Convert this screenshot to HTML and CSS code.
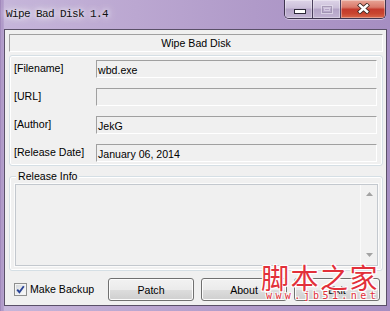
FILE: index.html
```html
<!DOCTYPE html>
<html lang="en">
<head>
<meta charset="utf-8">
<title>Wipe Bad Disk 1.4</title>
<link rel="stylesheet" href="styles.css">
</head>
<body>
<div class="window">
  <div class="titlebar">
    <span class="title">Wipe Bad Disk 1.4</span>
    <div class="caption">
      <div class="cbtn min">
        <svg width="12" height="5" viewBox="0 0 12 5"><rect x="0.5" y="0.5" width="11" height="4" fill="#fff" stroke="#2b2838"/></svg>
      </div>
      <div class="cbtn max">
        <svg width="12" height="9" viewBox="0 0 12 9"><rect x="0.5" y="0.5" width="11" height="8" fill="none" stroke="#e6e0ee" stroke-opacity="0.7"/><rect x="1.5" y="1.5" width="9" height="6" fill="none" stroke="#9c90ad" stroke-opacity="0.8"/><rect x="3.5" y="3.5" width="5" height="2" fill="none" stroke="#e6e0ee" stroke-opacity="0.6"/></svg>
      </div>
      <div class="cbtn close">
        <svg width="13" height="11" viewBox="0 0 13 11"><path d="M1.5 1 L11.5 10 M11.5 1 L1.5 10" stroke="#3b2520" stroke-width="4.2"/><path d="M2 1.5 L11 9.5 M11 1.5 L2 9.5" stroke="#fff" stroke-width="2.4"/></svg>
      </div>
    </div>
  </div>

  <div class="client">
    <div class="header">Wipe Bad Disk</div>

    <div class="group fields">
      <div class="label">[Filename]</div><div class="field">wbd.exe</div>
      <div class="label">[URL]</div><div class="field"></div>
      <div class="label">[Author]</div><div class="field">JekG</div>
      <div class="label">[Release Date]</div><div class="field">January 06, 2014</div>
    </div>

    <div class="group release">
      <span class="legend">Release Info</span>
      <div class="memo">
        <div class="memo-text"></div>
        <div class="vscroll">
          <svg width="7" height="4" viewBox="0 0 7 4"><path d="M0 4 L3.5 0 L7 4Z" fill="#a3a3a3"/></svg>
          <svg width="7" height="4" viewBox="0 0 7 4"><path d="M0 0 L3.5 4 L7 0Z" fill="#a3a3a3"/></svg>
        </div>
      </div>
    </div>

    <div class="actions">
      <label class="check">
        <span class="box"><svg width="11" height="11" viewBox="0 0 11 11"><path d="M2.2 5.6 L4.4 8.2 L8.8 2.2" fill="none" stroke="#2a4496" stroke-width="1.9"/></svg></span>
        <span>Make Backup</span>
      </label>
      <button class="btn">Patch</button>
      <button class="btn">About</button>
      <button class="btn">Exit</button>
    </div>
  </div>

  <div class="watermark">
    <div class="wm-cn">脚本之家</div>
    <div class="wm-url">www.jb51.net</div>
  </div>
</div>
</body>
</html>
```

FILE: styles.css
```css
* { box-sizing: border-box; }

html, body {
  margin: 0;
  padding: 0;
}

body {
  width: 390px;
  height: 311px;
  overflow: hidden;
  background: #b39dcb;
  font-family: "Liberation Sans", Arial, sans-serif;
  font-size: 10.6px;
  color: #000;
}

.window {
  position: relative;
  width: 390px;
  height: 311px;
  background:
    linear-gradient(90deg, #9a80b6 0, #b9a5cf 2px, #a78fc3 3px, transparent 4px),
    linear-gradient(90deg, #c6b6da 0%, #bba7d1 35%, #b09ac9 65%, #a68ec2 100%);
}

/* ---------- title bar ---------- */
.titlebar {
  height: 29px;
  display: flex;
  justify-content: space-between;
  align-items: flex-start;
}

.title {
  margin-top: 8px;
  padding-left: 6px;
  font-family: "Liberation Mono", "DejaVu Sans Mono", monospace;
  font-size: 11px;
  letter-spacing: -0.6px;
  line-height: 12px;
  color: #111;
  text-shadow: 0 0 5px #fff, 0 0 9px rgba(255,255,255,0.9), 0 0 14px rgba(255,255,255,0.7);
}

.caption {
  display: flex;
  height: 19px;
  margin-right: 4px;
  border: 1px solid #3f354f;
  border-top: none;
  border-radius: 0 0 5px 5px;
  overflow: hidden;
  box-shadow: 0 1px 0 rgba(255,255,255,0.45);
}

.cbtn {
  height: 18px;
  display: flex;
  justify-content: center;
  box-shadow: inset 0 0 0 1px rgba(255,255,255,0.35);
}

.cbtn.min {
  width: 27px;
  align-items: flex-end;
  padding-bottom: 4px;
  padding-left: 3px;
  background: linear-gradient(#ddd4e8 0%, #cbbfd9 45%, #b3a3c6 50%, #c2b4d3 100%);
}

.cbtn.max {
  width: 28px;
  align-items: flex-start;
  padding-top: 5px;
  border-left: 1px solid #4a3f5c;
  background: linear-gradient(#ddd4e8 0%, #cbbfd9 45%, #b3a3c6 50%, #c2b4d3 100%);
}

.cbtn.close {
  width: 45px;
  align-items: center;
  padding-bottom: 1px;
  border-left: 1px solid #4a3f5c;
  background: linear-gradient(#e8a597 0%, #d9796a 40%, #c43b2d 52%, #c9452f 75%, #d9684c 100%);
}

/* ---------- client ---------- */
.client {
  height: 277px;
  margin: 0 3px 0 4px;
  padding: 4px 3px 0 4px;
  background: #f0f0f0;
  border: 1px solid #5a5068;
}

.header {
  height: 18px;
  line-height: 16px;
  text-align: center;
  border-top: 1px solid #a0a0a0;
  border-left: 1px solid #a0a0a0;
  border-bottom: 1px solid #fff;
  border-right: 1px solid #fff;
}

.group {
  border: 1px solid #d5dfe5;
  border-radius: 3px;
  box-shadow: inset 0 0 0 1px #fff;
}

.fields {
  margin-top: 3px;
  height: 111px;
  padding: 4px 5px 3px 4px;
  display: grid;
  grid-template-columns: 82px 1fr;
  grid-auto-rows: 18px;
  row-gap: 10px;
  align-items: center;
}

.label {
  line-height: 16px;
  padding-bottom: 2px;
}

.field {
  height: 18px;
  line-height: 16px;
  padding-left: 1px;
  padding-top: 1px;
  border-top: 1px solid #a0a0a0;
  border-left: 1px solid #a0a0a0;
  border-bottom: 1px solid #fff;
  border-right: 1px solid #fff;
}

.release {
  position: relative;
  margin-top: 10px;
  height: 95px;
  padding: 7px 4px 3px 5px;
}

.legend {
  position: absolute;
  top: -7px;
  left: 6px;
  padding: 0 2px;
  line-height: 12px;
  background: #f0f0f0;
}

.memo {
  height: 82px;
  display: flex;
  border: 1px solid #c3c8ce;
  box-shadow: 0 0 0 1px #fbfbfb;
  background: #f0f0f0;
}

.memo-text {
  flex: 1;
}

.vscroll {
  width: 17px;
  display: flex;
  flex-direction: column;
  justify-content: space-between;
  align-items: center;
  padding: 7px 0 8px 1px;
  border-left: 1px solid #fafafa;
  background: #f1f1f1;
}

.vscroll svg { display: block; }

/* ---------- bottom actions ---------- */
.actions {
  margin-top: 7px;
  height: 23px;
  display: flex;
  align-items: center;
  gap: 7px;
  padding-left: 5px;
}

.check {
  width: 87px;
  display: flex;
  align-items: center;
  gap: 3px;
  padding-bottom: 1px;
}

.box {
  width: 13px;
  height: 13px;
  border: 1px solid #8e8f8f;
  background: linear-gradient(135deg, #cfd3d8 0%, #eef0f2 60%, #fbfbfb 100%);
  box-shadow: inset 0 0 0 1px #f4f4f4;
  display: flex;
  align-items: center;
  justify-content: center;
}

.box svg { display: block; }

.btn {
  width: 86px;
  height: 23px;
  padding: 0;
  font: inherit;
  color: #000;
  border: 1px solid #707070;
  border-radius: 3px;
  background: linear-gradient(#f2f2f2 0%, #ebebeb 50%, #dddddd 51%, #cfcfcf 100%);
  box-shadow: inset 0 0 0 1px #fcfcfc;
}

/* ---------- watermark overlay ---------- */
.watermark {
  position: absolute;
  left: 261px;
  top: 262px;
  pointer-events: none;
}

.wm-cn {
  font-family: "Noto Sans CJK SC", sans-serif;
  font-size: 28px;
  font-weight: 400;
  letter-spacing: 1.5px;
  line-height: 30px;
  color: #e2303a;
  text-shadow: 1px 1px 0 #fff, -1px -1px 0 #fff, 1px -1px 0 #fff, -1px 1px 0 #fff, 0 0 3px #fff;
}

.wm-url {
  margin-top: -1px;
  padding-left: 5px;
  font-family: "DejaVu Sans Mono", monospace;
  font-size: 10px;
  letter-spacing: 3.4px;
  line-height: 10px;
  color: #e2303a;
  text-shadow: 1px 1px 0 #fff, -1px -1px 0 #fff, 1px -1px 0 #fff, -1px 1px 0 #fff;
}
```
